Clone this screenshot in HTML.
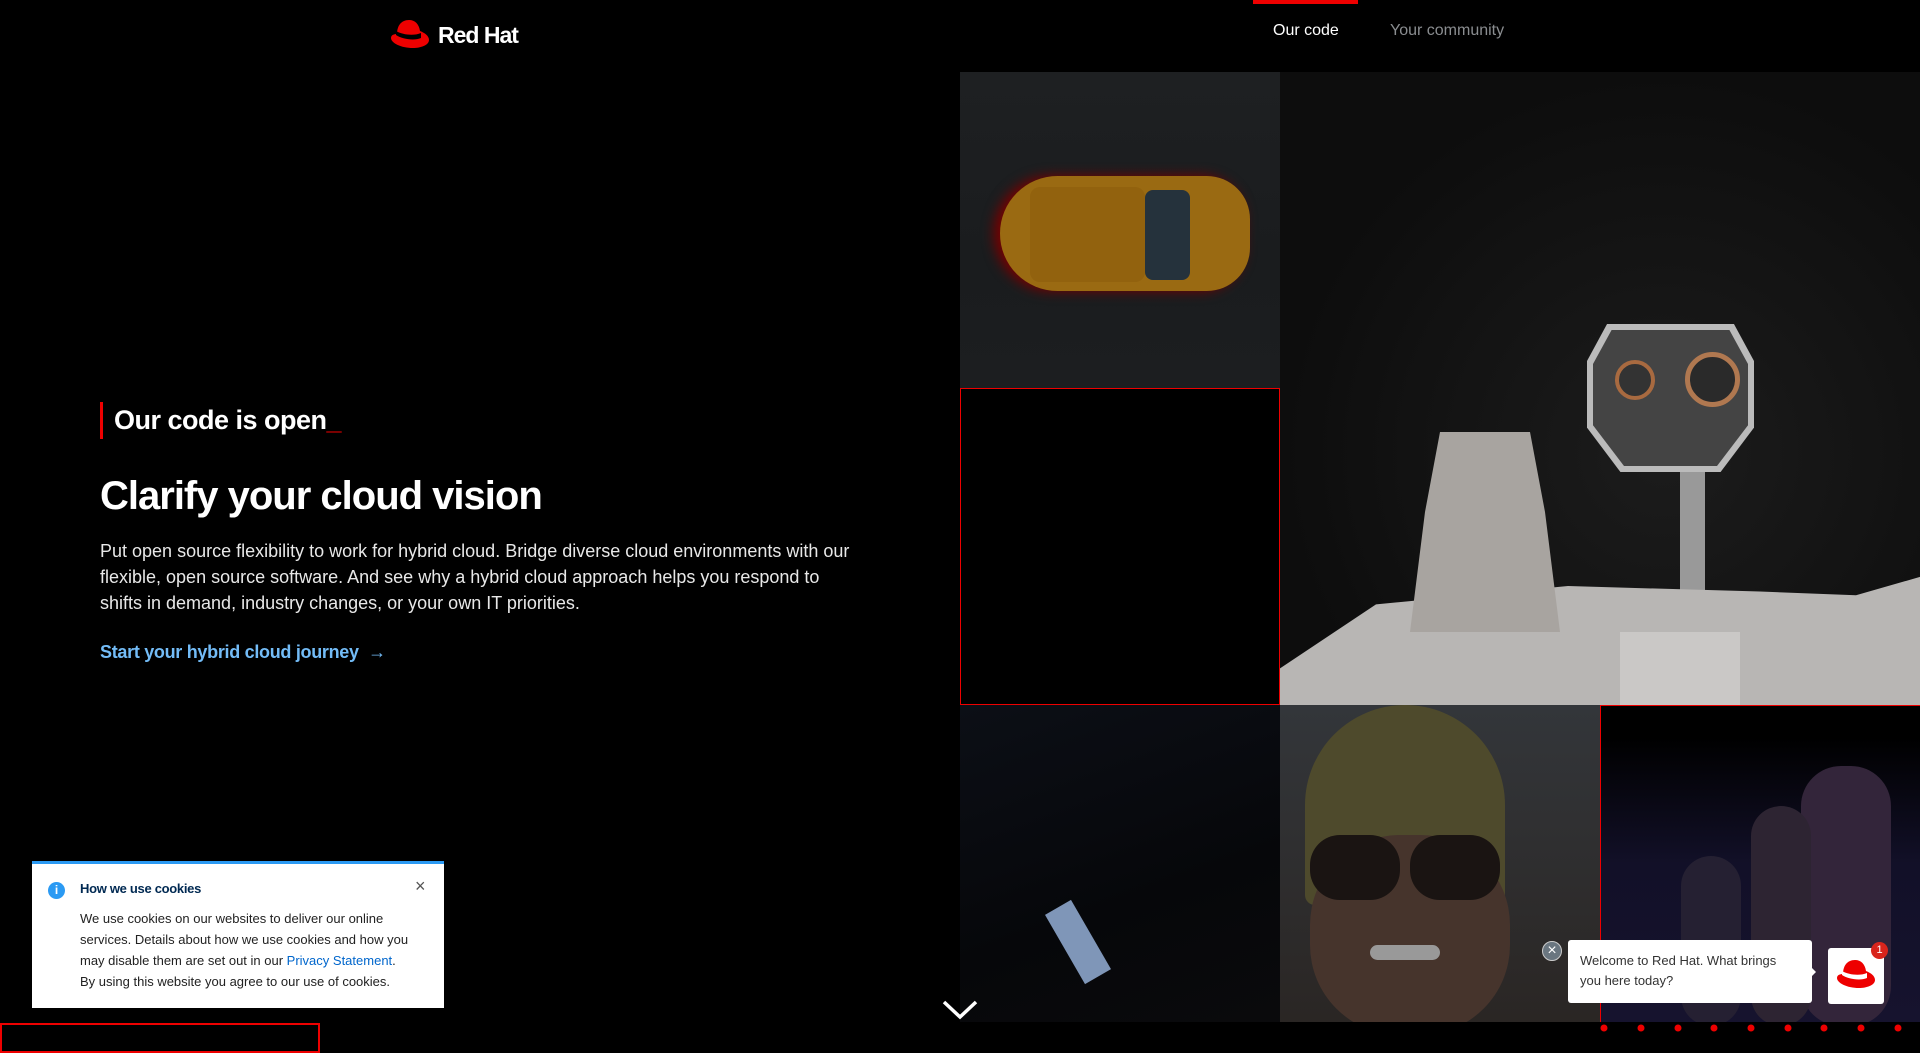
<!DOCTYPE html>
<html><head><meta charset="utf-8"><style>
*{margin:0;padding:0;box-sizing:border-box}
body{width:1920px;height:1040px;background:#000;overflow:hidden;position:relative;font-family:"Liberation Sans",sans-serif;color:#fff}
.abs{position:absolute}
.cell{position:absolute;overflow:hidden}
</style></head><body>
<div class="abs" style="left:389px;top:18px;width:40px;height:34px">
<svg width="42" height="34" viewBox="0 0 42 34"><path d="M8 16 C8 8 12 2 20 2 C26 2 30 6 31 13 C36 15 40 18 40 22 C40 27 32 30 24 30 C12 30 2 25 2 20 C2 17 5 16 8 16Z" fill="#e00"/><path d="M7 17 C13 21 25 23 32 20 L32 15 C25 18 14 17 7 13Z" fill="#000"/></svg></div>
<div class="abs" style="left:438px;top:22px;font-size:23px;font-weight:bold;letter-spacing:-1px">Red Hat</div>
<div class="abs" style="left:1253px;top:0;width:105px;height:4px;background:#e00"></div>
<div class="abs" style="left:1273px;top:22px;font-size:16px;color:#fff">Our code</div>
<div class="abs" style="left:1390px;top:22px;font-size:16px;color:#8a8d90">Your community</div>
<div class="abs" style="left:100px;top:402px;width:3px;height:37px;background:#e00"></div>
<div class="abs" style="left:114px;top:405px;font-size:27px;font-weight:bold;letter-spacing:-0.5px">Our code is open<span style="color:#e00">_</span></div>
<div class="abs" style="left:100px;top:474px;font-size:40px;font-weight:bold;letter-spacing:-1px">Clarify your cloud vision</div>
<div class="abs" style="left:100px;top:538px;width:760px;font-size:18px;line-height:26px;color:#e8e8e8">Put open source flexibility to work for hybrid cloud. Bridge diverse cloud environments with our flexible, open source software. And see why a hybrid cloud approach helps you respond to shifts in demand, industry changes, or your own IT priorities.</div>
<div class="abs" style="left:100px;top:642px;font-size:18px;font-weight:bold;color:#73bcf7;letter-spacing:-0.3px">Start your hybrid cloud journey &nbsp;→</div>
<div class="cell" style="left:960px;top:72px;width:320px;height:316px;background:linear-gradient(180deg,#1e2022,#1a1c1e 60%,#1c1e20)">
 <div class="abs" style="left:40px;top:104px;width:250px;height:115px;border-radius:60px 45px 45px 60px;background:#9a6a12;box-shadow:-6px 0 12px #700"></div>
 <div class="abs" style="left:70px;top:115px;width:115px;height:95px;background:#92620e;border-radius:10px"></div>
 <div class="abs" style="left:185px;top:118px;width:45px;height:90px;background:#25323c;border-radius:8px"></div>
</div>
<div class="cell" style="left:960px;top:388px;width:320px;height:317px;border:1.5px solid #e00;background:#000"></div>
<div class="cell" style="left:1280px;top:72px;width:640px;height:633px;background:radial-gradient(ellipse at 60% 60%,#1c1c1c,#0d0d0d 70%)">
 <div class="abs" style="left:307px;top:252px;width:167px;height:148px;background:#bbb;clip-path:polygon(12% 0,88% 0,100% 25%,100% 70%,80% 100%,20% 100%,0 70%,0 25%)"></div>
 <div class="abs" style="left:313px;top:258px;width:155px;height:136px;background:#444;clip-path:polygon(12% 0,88% 0,100% 25%,100% 70%,80% 100%,20% 100%,0 70%,0 25%)"></div>
 <div class="abs" style="left:335px;top:288px;width:40px;height:40px;border-radius:50%;border:4px solid #a86a40;background:#333"></div>
 <div class="abs" style="left:405px;top:280px;width:55px;height:55px;border-radius:50%;border:5px solid #b07850;background:#2a2a2a"></div>
 <div class="abs" style="left:400px;top:400px;width:25px;height:300px;background:#999"></div>
 <div class="abs" style="left:0;top:450px;width:640px;height:183px;background:#b8b6b4;clip-path:polygon(15% 45%,45% 35%,75% 38%,90% 40%,100% 30%,100% 100%,0 100%,0 80%)"></div>
 <div class="abs" style="left:130px;top:360px;width:150px;height:200px;background:#a8a4a0;clip-path:polygon(20% 0,80% 0,90% 40%,100% 100%,0 100%,10% 40%)"></div>
 <div class="abs" style="left:340px;top:560px;width:120px;height:73px;background:#cac8c6"></div>
</div>
<div class="cell" style="left:960px;top:705px;width:320px;height:317px;background:linear-gradient(160deg,#0c0f16,#06070a 60%,#0a0a0c)">
 <div class="abs" style="left:103px;top:197px;width:30px;height:80px;background:#7f96b8;transform:rotate(-30deg)"></div>
</div>
<div class="cell" style="left:1280px;top:705px;width:320px;height:317px;background:linear-gradient(180deg,#33363a,#2a2624)">
 <div class="abs" style="left:25px;top:0;width:200px;height:200px;border-radius:50% 50% 10px 10px;background:#4e4a2c"></div>
 <div class="abs" style="left:30px;top:130px;width:200px;height:200px;border-radius:45%;background:#46342c"></div>
 <div class="abs" style="left:30px;top:130px;width:90px;height:65px;border-radius:30px;background:#1a1412"></div>
 <div class="abs" style="left:130px;top:130px;width:90px;height:65px;border-radius:30px;background:#1a1412"></div>
 <div class="abs" style="left:90px;top:240px;width:70px;height:15px;border-radius:8px;background:#999"></div>
</div>
<div class="cell" style="left:1600px;top:705px;width:320px;height:317px;border-left:1.5px solid #e00;border-top:1.5px solid #e00;background:linear-gradient(180deg,#000 10%,#121028 50%,#16132e)">
 <div class="abs" style="left:200px;top:60px;width:90px;height:260px;border-radius:40px;background:#33253a"></div>
 <div class="abs" style="left:150px;top:100px;width:60px;height:220px;border-radius:30px;background:#2d2432"></div>
 <div class="abs" style="left:80px;top:150px;width:60px;height:170px;border-radius:30px;background:#252032"></div>
</div>
<svg class="abs" style="left:940px;top:998px" width="40" height="24" viewBox="0 0 40 24"><path d="M4 4 L20 19 L36 4" stroke="#fff" stroke-width="3.5" fill="none"/></svg>
<div class="abs" style="left:1600px;top:1021px;width:320px;height:10px">
 <svg width="320" height="10"><g fill="#e00"><circle cx="4" cy="4" r="3.5"/><circle cx="41" cy="4" r="3.5"/><circle cx="78" cy="4" r="3.5"/><circle cx="114" cy="4" r="3.5"/><circle cx="151" cy="4" r="3.5"/><circle cx="188" cy="4" r="3.5"/><circle cx="224" cy="4" r="3.5"/><circle cx="261" cy="4" r="3.5"/><circle cx="298" cy="4" r="3.5"/></g></svg></div>
<div class="abs" style="left:0;top:1023px;width:320px;height:30px;border:2px solid #e00"></div>
<div class="abs" style="left:32px;top:861px;width:412px;height:147px;background:#fff;border-top:3px solid #2b9af3;color:#151515">
 <div class="abs" style="left:16px;top:18px;width:17px;height:17px;border-radius:50%;background:#2b9af3;color:#fff;font-size:12px;font-weight:bold;text-align:center;line-height:17px">i</div>
 <div class="abs" style="left:48px;top:17px;font-size:13px;font-weight:bold;color:#002952;letter-spacing:-0.3px">How we use cookies</div>
 <div class="abs" style="left:383px;top:12px;font-size:18px;color:#555">×</div>
 <div class="abs" style="left:48px;top:44px;width:330px;font-size:13px;line-height:21px;color:#222">We use cookies on our websites to deliver our online services. Details about how we use cookies and how you may disable them are set out in our <span style="color:#0066cc">Privacy Statement</span>. By using this website you agree to our use of cookies.</div>
</div>
<div class="abs" style="left:1542px;top:941px;width:20px;height:20px;border-radius:50%;background:#6a7680;border:1px solid #ccc;color:#fff;text-align:center;line-height:18px;font-size:16px">×</div>
<div class="abs" style="left:1568px;top:940px;width:244px;height:63px;background:#fff;border-radius:3px;color:#333;font-size:13px;line-height:20px;padding:11px 20px 10px 12px">Welcome to Red Hat. What brings you here today?</div>
<div class="abs" style="left:1808px;top:964px;width:0;height:0;border-top:8px solid transparent;border-bottom:8px solid transparent;border-left:8px solid #fff"></div>
<div class="abs" style="left:1828px;top:948px;width:56px;height:56px;background:#fff;border-radius:3px">
 <svg style="position:absolute;left:7px;top:10px" width="42" height="34" viewBox="0 0 42 34"><path d="M8 16 C8 8 12 2 20 2 C26 2 30 6 31 13 C36 15 40 18 40 22 C40 27 32 30 24 30 C12 30 2 25 2 20 C2 17 5 16 8 16Z" fill="#e00"/><path d="M7 17 C13 21 25 23 32 20 L32 15 C25 18 14 17 7 13Z" fill="#fff"/></svg>
</div>
<div class="abs" style="left:1871px;top:942px;width:17px;height:17px;border-radius:50%;background:#d9251c;color:#fff;font-size:11px;text-align:center;line-height:17px">1</div>
</body></html>
